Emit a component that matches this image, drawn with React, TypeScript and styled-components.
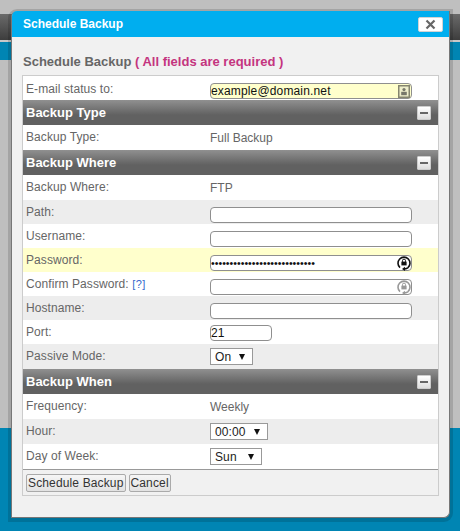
import React from 'react';
import styled, { createGlobalStyle } from 'styled-components';

const GlobalStyle = createGlobalStyle`
  html, body {
    margin: 0;
    padding: 0;
    background: #bfbfbf;
  }
  body {
    font-family: "Liberation Sans", Arial, sans-serif;
    font-size: 12px;
    color: #666;
  }
`;

const Page = styled.div`
  width: 460px;
  height: 531px;
  overflow: hidden;
  position: relative;
  display: flex;
  flex-direction: column;
  background: #bfbfbf;
`;

const TopGap = styled.div`
  height: 14px;
`;

const DarkBar = styled.div`
  height: 26px;
  background: linear-gradient(180deg, #6a6a6a 0%, #3d3d3d 100%);
`;

const BlueBar = styled.div`
  height: 18px;
  border-top: 2px solid #c8c8c8;
  background: #0085b3;
`;

const Middle = styled.div`
  flex: 1;
`;

const Footer = styled.div`
  height: 103px;
  background: #0085b3;
`;

const Dialog = styled.div`
  position: absolute;
  left: 11px;
  top: 11px;
  width: 439px;
  height: 507px;
  box-sizing: border-box;
  background: #f1f1f1;
  border-radius: 6px 0 6px 0;
  border-left: 1px solid #777;
  border-right: 1px solid #777;
  border-bottom: 1px solid #777;
  box-shadow: 0 1px 0 3px rgba(0, 0, 0, 0.14);
`;

const TitleBar = styled.div`
  height: 26px;
  background: #00aeef;
  border-radius: 5px 0 0 0;
  display: flex;
  align-items: center;
  justify-content: space-between;
  padding: 0 6px 0 11px;
`;

const TitleText = styled.span`
  color: #fff;
  font-size: 12px;
  font-weight: bold;
`;

const CloseButton = styled.button`
  width: 25px;
  height: 15px;
  padding: 0;
  border: 1px solid #d3d3d3;
  border-radius: 2px;
  background: #fff;
  display: flex;
  align-items: center;
  justify-content: center;
`;

const Content = styled.div`
  padding: 16px 10px 0 10px;
`;

const Heading = styled.h3`
  margin: 0 0 5px 1px;
  height: 17px;
  font-size: 13px;
  line-height: 17px;
  font-weight: bold;
  color: #666;
`;

const Required = styled.span`
  color: #c4357f;
`;

const Panel = styled.div`
  border: 1px solid #ccc;
  width: 417px;
  box-sizing: border-box;
`;

const Row = styled.div<{ $tone?: 'white' | 'grey' | 'yellow'; $h?: number }>`
  height: ${({ $h }) => $h ?? 24}px;
  display: grid;
  grid-template-columns: 187px 1fr;
  align-items: center;
  background: ${({ $tone }) =>
    $tone === 'grey' ? '#ededed' : $tone === 'yellow' ? '#ffffcc' : '#fff'};
`;

const Label = styled.div<{ $low?: boolean }>`
  padding-left: 3px;
  padding-bottom: ${({ $low }) => ($low ? 0 : 1)}px;
  padding-top: ${({ $low }) => ($low ? 2 : 0)}px;
  font-size: 12px;
  letter-spacing: 0.08px;
  color: #666;
`;

const Help = styled.a`
  color: #36c;
  font-size: 11px;
  letter-spacing: 0.5px;
`;

const Value = styled.div`
  font-size: 12px;
  color: #666;
`;

const SectionHeader = styled.div`
  height: 25px;
  display: flex;
  align-items: center;
  justify-content: space-between;
  padding: 0 7px 0 3px;
  background: linear-gradient(180deg, #909090 0%, #616161 60%, #616161 100%);
  color: #fff;
  font-size: 13px;
  font-weight: bold;
`;

const Toggle = styled.button`
  width: 14px;
  height: 14px;
  padding: 0;
  border: 1px solid #ccc;
  border-radius: 1px;
  background: linear-gradient(180deg, #fff, #ddd);
  display: flex;
  align-items: center;
  justify-content: center;

  &::before {
    content: '';
    width: 8px;
    height: 2px;
    background: #666;
  }
`;

const FieldWrap = styled.div<{ $width: number; $short?: boolean }>`
  position: relative;
  width: ${({ $width }) => $width}px;
  height: 16px;
  align-self: end;
  margin-bottom: ${({ $short }) => ($short ? 3 : 1)}px;
`;

const TextInput = styled.input<{ $tint?: boolean }>`
  display: block;
  width: 100%;
  height: 100%;
  box-sizing: border-box;
  padding: 0;
  border: 1px solid #8f8f8f;
  border-radius: 4px;
  outline: none;
  background: ${({ $tint }) => ($tint ? '#ffffcc' : '#fff')};
  font-family: "Liberation Sans", Arial, sans-serif;
  font-size: 12px;
  letter-spacing: 0.15px;
  color: #111;

  &[type='password'] {
    font-size: 10.6px;
    letter-spacing: 0;
  }
`;

const FieldIcon = styled.span`
  position: absolute;
  right: 1px;
  top: 0;
  width: 15px;
  height: 16px;
  display: flex;
  align-items: center;
  justify-content: center;
`;

const SelectBox = styled.div<{ $width: number }>`
  width: ${({ $width }) => $width}px;
  height: 17px;
  box-sizing: border-box;
  border: 1px solid #999;
  background: #fff;
  display: flex;
  align-items: center;
  justify-content: space-between;
  padding: 0 7px 0 4px;
  font-size: 12px;
  letter-spacing: 0.1px;
  color: #222;
`;

const Arrow = styled.span`
  width: 0;
  height: 0;
  border-left: 3.5px solid transparent;
  border-right: 3.5px solid transparent;
  border-top: 6px solid #111;
`;

const Actions = styled.div`
  height: 25px;
  border-top: 1px solid #999;
  display: flex;
  align-items: center;
  gap: 3px;
  padding-left: 3px;
`;

const ActionButton = styled.button`
  height: 18px;
  padding: 0 1px;
  border: 1px solid #aaa;
  border-radius: 2px;
  background: linear-gradient(180deg, #f6f6f6, #e2e2e2);
  font-family: "Liberation Sans", Arial, sans-serif;
  font-size: 12px;
  letter-spacing: 0.14px;
  color: #333;
`;

const LockIcon = ({ color }: { color: string }) => (
  <svg width="14" height="16" viewBox="0 0 14 16" fill="none">
    <path d="M3 12.6A6 6 0 1 1 11 12.6" stroke={color} strokeWidth="1.6" />
    <path d="M11 12.6A6 6 0 0 1 8 13.9" stroke={color} strokeWidth="1.6" />
    <path d="M8 11.8v4.2L5 13.9z" fill={color} />
    <rect x="4.4" y="6.6" width="5.2" height="3.8" fill={color} />
    <path d="M5.5 6.8V5.6a1.5 1.5 0 0 1 3 0v1.2" stroke={color} strokeWidth="1" />
  </svg>
);

const ContactIcon = () => (
  <svg width="12" height="13" viewBox="0 0 12 13" fill="none">
    <rect x="0.75" y="0.75" width="10.5" height="11.5" fill="#eeeecb" stroke="#85856f" strokeWidth="1.5" />
    <circle cx="6" cy="4.6" r="1.6" fill="#77776a" />
    <rect x="3.2" y="6.8" width="5.6" height="3.4" fill="#77776a" />
  </svg>
);

const CloseIcon = () => (
  <svg width="11" height="11" viewBox="0 0 11 11">
    <path d="M1.5 1.5l8 8M9.5 1.5l-8 8" stroke="#666" strokeWidth="2.2" />
  </svg>
);

export default function App() {
  return (
    <Page>
      <GlobalStyle />
      <TopGap />
      <DarkBar />
      <BlueBar />
      <Middle />
      <Footer />
      <Dialog>
        <TitleBar>
          <TitleText>Schedule Backup</TitleText>
          <CloseButton aria-label="Close">
            <CloseIcon />
          </CloseButton>
        </TitleBar>
        <Content>
          <Heading>
            Schedule Backup <Required>( All fields are required )</Required>
          </Heading>
          <Panel>
            <Row $h={24}>
              <Label $low>E-mail status to:</Label>
              <FieldWrap $width={202}>
                <TextInput $tint defaultValue="example@domain.net" />
                <FieldIcon>
                  <ContactIcon />
                </FieldIcon>
              </FieldWrap>
            </Row>
            <SectionHeader>
              Backup Type
              <Toggle aria-label="Collapse" />
            </SectionHeader>
            <Row $h={25}>
              <Label>Backup Type:</Label>
              <Value>Full Backup</Value>
            </Row>
            <SectionHeader>
              Backup Where
              <Toggle aria-label="Collapse" />
            </SectionHeader>
            <Row $h={25}>
              <Label>Backup Where:</Label>
              <Value>FTP</Value>
            </Row>
            <Row $tone="grey">
              <Label>Path:</Label>
              <FieldWrap $width={202}>
                <TextInput />
              </FieldWrap>
            </Row>
            <Row>
              <Label>Username:</Label>
              <FieldWrap $width={202}>
                <TextInput />
              </FieldWrap>
            </Row>
            <Row $tone="yellow">
              <Label>Password:</Label>
              <FieldWrap $width={202}>
                <TextInput type="password" defaultValue="abcdefghijklmnopqrstuvwxyz12" />
                <FieldIcon>
                  <LockIcon color="#111" />
                </FieldIcon>
              </FieldWrap>
            </Row>
            <Row>
              <Label>
                Confirm Password: <Help>[?]</Help>
              </Label>
              <FieldWrap $width={202}>
                <TextInput type="password" />
                <FieldIcon>
                  <LockIcon color="#999" />
                </FieldIcon>
              </FieldWrap>
            </Row>
            <Row $tone="grey">
              <Label>Hostname:</Label>
              <FieldWrap $width={202}>
                <TextInput />
              </FieldWrap>
            </Row>
            <Row>
              <Label>Port:</Label>
              <FieldWrap $width={62} $short>
                <TextInput defaultValue="21" />
              </FieldWrap>
            </Row>
            <Row $tone="grey" $h={25}>
              <Label>Passive Mode:</Label>
              <SelectBox $width={43}>
                On <Arrow />
              </SelectBox>
            </Row>
            <SectionHeader>
              Backup When
              <Toggle aria-label="Collapse" />
            </SectionHeader>
            <Row $h={25}>
              <Label>Frequency:</Label>
              <Value>Weekly</Value>
            </Row>
            <Row $tone="grey" $h={25}>
              <Label>Hour:</Label>
              <SelectBox $width={58}>
                00:00 <Arrow />
              </SelectBox>
            </Row>
            <Row $h={25}>
              <Label>Day of Week:</Label>
              <SelectBox $width={52}>
                Sun <Arrow />
              </SelectBox>
            </Row>
            <Actions>
              <ActionButton>Schedule Backup</ActionButton>
              <ActionButton>Cancel</ActionButton>
            </Actions>
          </Panel>
        </Content>
      </Dialog>
    </Page>
  );
}
